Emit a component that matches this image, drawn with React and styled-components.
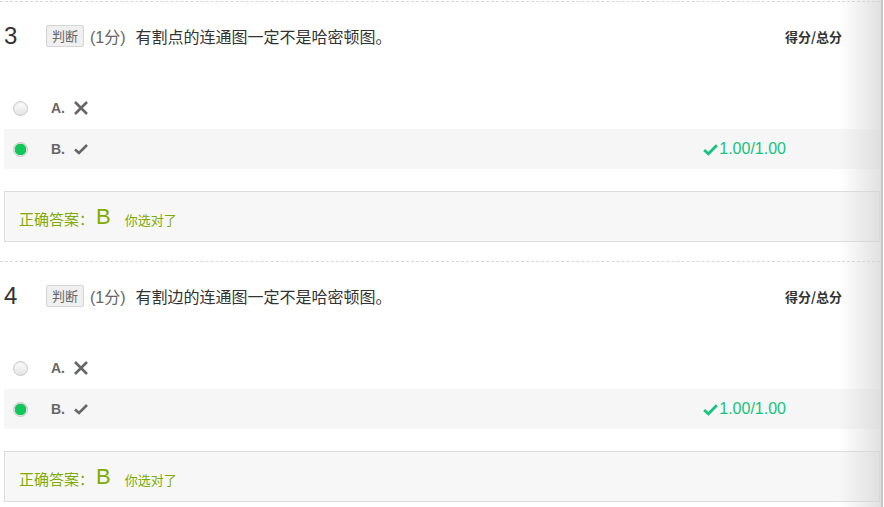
import React from "react"
import styled, { createGlobalStyle } from "styled-components"

const GlobalStyle = createGlobalStyle`
  body {
    margin: 0;
    background: #fff;
    font-family: "Liberation Sans", Arial, "Noto Sans CJK SC", sans-serif;
    color: #333;
  }
`

const Page = styled.div`
  position: relative;
  width: 884px;
  height: 507px;
  overflow: hidden;
`

const List = styled.div`
  width: 880px;
  padding-top: 1px;
`

const Question = styled.div`
  border-top: 1px dashed #d8d8d8;
  padding: 22px 0 19px;
`

const Header = styled.div`
  display: flex;
  align-items: center;
  height: 24px;
  padding-left: 4px;
  padding-right: 38px;
`

const Num = styled.span`
  font-size: 24px;
  color: #333;
  width: 42px;
`

const Badge = styled.span`
  display: inline-block;
  height: 20px;
  line-height: 20px;
  padding: 0 5px;
  font-size: 13px;
  color: #666;
  background: #efefef;
  border: 1px solid #d6d6d6;
  border-radius: 2px;
  font-family: "Noto Sans CJK SC", sans-serif;
`

const Points = styled.span`
  font-size: 16px;
  color: #666;
  margin: 0 10px 0 6px;
  font-family: "Liberation Sans", "Noto Sans CJK SC", sans-serif;
`

const Title = styled.span`
  font-size: 16px;
  color: #333;
  font-family: "Noto Sans CJK SC", sans-serif;
`

const ScoreHead = styled.span`
  margin-left: auto;
  font-size: 13px;
  font-weight: bold;
  color: #333;
  font-family: "Noto Sans CJK SC", sans-serif;
`

const Options = styled.div`
  margin-top: 40px;
  display: flex;
  flex-direction: column;
  gap: 1px;
`

const Option = styled.div`
  display: flex;
  align-items: center;
  height: 40px;
  margin-left: 4px;
  padding-left: 9px;
  padding-right: 94px;
  background: ${p => (p.$active ? "#f6f6f6" : "transparent")};
`

const Radio = styled.span`
  width: 13px;
  height: 13px;
  border-radius: 50%;
  border: 1px solid #c9c9c9;
  background: ${p =>
    p.$checked
      ? "radial-gradient(circle, #10c85a 0, #10c85a 5.5px, #e6e6e6 6px)"
      : "linear-gradient(#fdfdfd, #e4e4e4)"};
  box-shadow: inset 0 1px 1px rgba(0, 0, 0, 0.08);
`

const Label = styled.span`
  margin-left: 23px;
  font-size: 14px;
  font-weight: bold;
  color: #666;
  width: 22px;
`

const Mark = styled.svg`
  display: block;
`

const Score = styled.span`
  margin-left: auto;
  display: flex;
  align-items: center;
  font-size: 16px;
  color: #14c37e;
`

const AnswerBox = styled.div`
  margin: 22px 0 0 4px;
  box-sizing: border-box;
  height: 51px;
  padding: 4px 0 0 14px;
  border: 1px solid #dcdcdc;
  background: #f7f7f7;
  display: flex;
  align-items: center;
  color: #7eab00;
  font-family: "Noto Sans CJK SC", sans-serif;
`

const AnswerLabel = styled.span`
  font-size: 15px;
`

const AnswerLetter = styled.span`
  font-size: 22px;
  margin: 0 14px 4px 2px;
  font-family: "Liberation Sans", sans-serif;
`

const AnswerNote = styled.span`
  font-size: 13px;
  margin-top: 2px;
`

// scroll shade along the right edge, lies over the rows
const EdgeShade = styled.div`
  position: absolute;
  top: 0;
  right: 1px;
  bottom: 0;
  width: 42px;
  background: linear-gradient(to right, rgba(230, 230, 230, 0), rgba(215, 215, 215, 0.75));
  border-right: 2px solid #c6c6c6;
  pointer-events: none;
`

const Cross = () => (
  <Mark width="16" height="16" viewBox="0 0 16 16">
    <path d="M2 2 L14 14 M14 2 L2 14" stroke="#666" strokeWidth="2.6" strokeLinecap="butt" />
  </Mark>
)

const Check = ({ color = "#666", size = 16 }) => (
  <Mark width={size} height={size} viewBox="0 0 16 16">
    <path d="M2 8.5 L6 12 L14 4" fill="none" stroke={color} strokeWidth="2.6" />
  </Mark>
)

const questions = [
  { no: 3, text: "有割点的连通图一定不是哈密顿图。" },
  { no: 4, text: "有割边的连通图一定不是哈密顿图。" },
]

const App = () => (
  <Page>
    <GlobalStyle />
    <List>
      {questions.map(q => (
        <Question key={q.no}>
          <Header>
            <Num>{q.no}</Num>
            <Badge>判断</Badge>
            <Points>(1分)</Points>
            <Title>{q.text}</Title>
            <ScoreHead>得分/总分</ScoreHead>
          </Header>
          <Options>
            <Option>
              <Radio />
              <Label>A.</Label>
              <Cross />
            </Option>
            <Option $active>
              <Radio $checked />
              <Label>B.</Label>
              <Check />
              <Score>
                <Check color="#14c37e" size={17} />
                1.00/1.00
              </Score>
            </Option>
          </Options>
          <AnswerBox>
            <AnswerLabel>正确答案：</AnswerLabel>
            <AnswerLetter>B</AnswerLetter>
            <AnswerNote>你选对了</AnswerNote>
          </AnswerBox>
        </Question>
      ))}
    </List>
    <EdgeShade />
  </Page>
)

export default App
